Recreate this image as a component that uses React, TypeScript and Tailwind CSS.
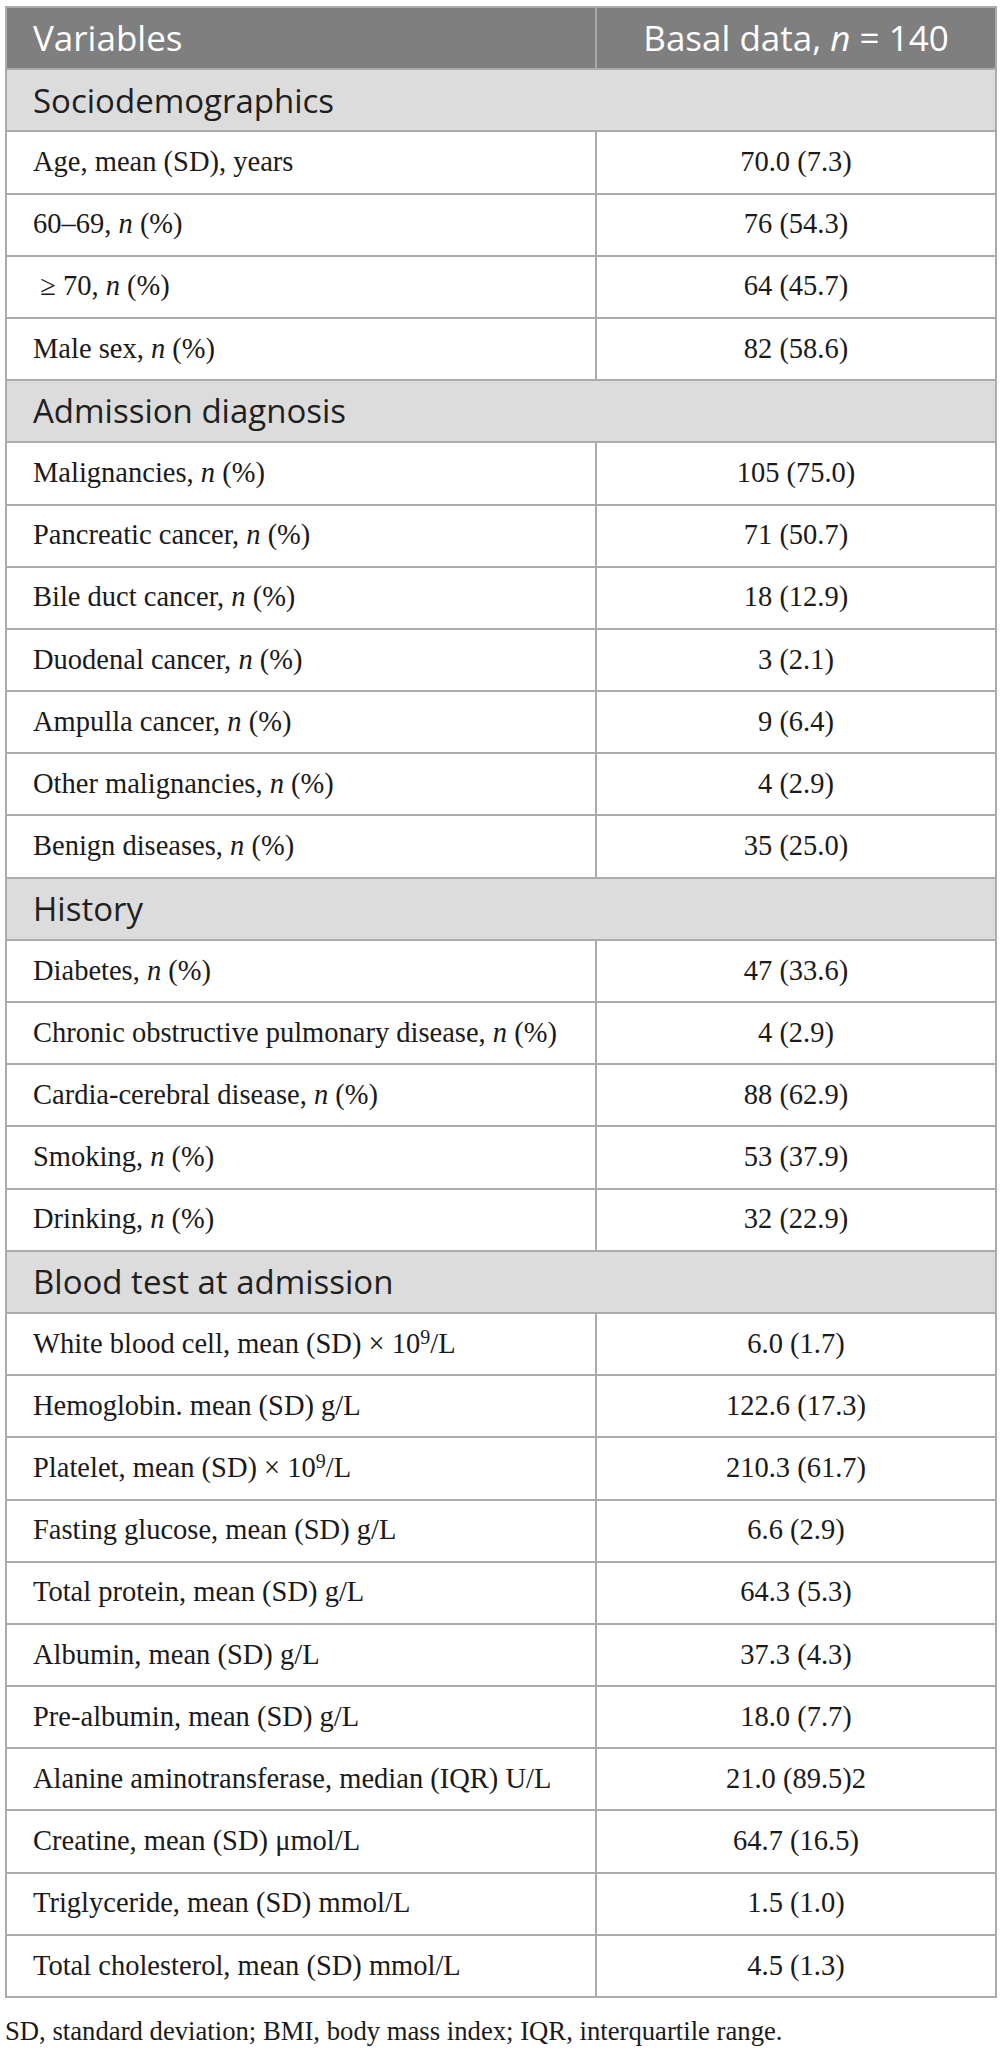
import React from "react";

type Row =
  | { kind: "section"; label: React.ReactNode }
  | { kind: "data"; label: React.ReactNode; value: string };

const N = () => <i>n</i>;
const Sup = () => (
  <sup className="relative -top-[0.45em] align-baseline text-[0.7em]">9</sup>
);

const rows: Row[] = [
  { kind: "section", label: "Sociodemographics" },
  { kind: "data", label: <>Age, mean (SD), years</>, value: "70.0 (7.3)" },
  { kind: "data", label: <>60–69, <N /> (%)</>, value: "76 (54.3)" },
  { kind: "data", label: <>&nbsp;≥ 70, <N /> (%)</>, value: "64 (45.7)" },
  { kind: "data", label: <>Male sex, <N /> (%)</>, value: "82 (58.6)" },
  { kind: "section", label: "Admission diagnosis" },
  { kind: "data", label: <>Malignancies, <N /> (%)</>, value: "105 (75.0)" },
  { kind: "data", label: <>Pancreatic cancer, <N /> (%)</>, value: "71 (50.7)" },
  { kind: "data", label: <>Bile duct cancer, <N /> (%)</>, value: "18 (12.9)" },
  { kind: "data", label: <>Duodenal cancer, <N /> (%)</>, value: "3 (2.1)" },
  { kind: "data", label: <>Ampulla cancer, <N /> (%)</>, value: "9 (6.4)" },
  { kind: "data", label: <>Other malignancies, <N /> (%)</>, value: "4 (2.9)" },
  { kind: "data", label: <>Benign diseases, <N /> (%)</>, value: "35 (25.0)" },
  { kind: "section", label: "History" },
  { kind: "data", label: <>Diabetes, <N /> (%)</>, value: "47 (33.6)" },
  { kind: "data", label: <>Chronic obstructive pulmonary disease, <N /> (%)</>, value: "4 (2.9)" },
  { kind: "data", label: <>Cardia-cerebral disease, <N /> (%)</>, value: "88 (62.9)" },
  { kind: "data", label: <>Smoking, <N /> (%)</>, value: "53 (37.9)" },
  { kind: "data", label: <>Drinking, <N /> (%)</>, value: "32 (22.9)" },
  { kind: "section", label: "Blood test at admission" },
  { kind: "data", label: <>White blood cell, mean (SD) × 10<Sup />/L</>, value: "6.0 (1.7)" },
  { kind: "data", label: <>Hemoglobin. mean (SD) g/L</>, value: "122.6 (17.3)" },
  { kind: "data", label: <>Platelet, mean (SD) × 10<Sup />/L</>, value: "210.3 (61.7)" },
  { kind: "data", label: <>Fasting glucose, mean (SD) g/L</>, value: "6.6 (2.9)" },
  { kind: "data", label: <>Total protein, mean (SD) g/L</>, value: "64.3 (5.3)" },
  { kind: "data", label: <>Albumin, mean (SD) g/L</>, value: "37.3 (4.3)" },
  { kind: "data", label: <>Pre-albumin, mean (SD) g/L</>, value: "18.0 (7.7)" },
  { kind: "data", label: <>Alanine aminotransferase, median (IQR) U/L</>, value: "21.0 (89.5)2" },
  { kind: "data", label: <>Creatine, mean (SD) μmol/L</>, value: "64.7 (16.5)" },
  { kind: "data", label: <>Triglyceride, mean (SD) mmol/L</>, value: "1.5 (1.0)" },
  { kind: "data", label: <>Total cholesterol, mean (SD) mmol/L</>, value: "4.5 (1.3)" },
];

const serif = "font-['Liberation_Serif',serif]";
const sans = "font-['Open_Sans',sans-serif]";

export default function App() {
  return (
    <div className="min-h-[2053px] bg-white pl-[5px] pt-[6px]">
      <div className="w-[992px] border-2 border-[#ababab]">
        {/* header */}
        <div
          className={`flex h-[62.19px] border-b-2 border-[#ababab] bg-[#7f7f7f] text-white ${sans} text-[35px]`}
        >
          <div className="flex w-[590px] items-center border-r-2 border-[#a9a9a9] pl-[26px]">
            <span>Variables</span>
          </div>
          <div className="flex flex-1 items-center justify-center">
            <span>
              Basal data, <i>n</i> = 140
            </span>
          </div>
        </div>
        {rows.map((r, i) => {
          const last = i === rows.length - 1;
          const rowCls = last ? "h-[60.19px]" : "h-[62.19px] border-b-2 border-[#ababab]";
          if (r.kind === "section") {
            return (
              <div
                key={i}
                className={`flex items-center bg-[#dcdcdc] pl-[26px] text-[33px] text-[#1f1f1f] ${sans} ${rowCls}`}
              >
                <span>{r.label}</span>
              </div>
            );
          }
          return (
            <div key={i} className={`flex text-[28.5px] text-[#1a1a1a] ${serif} ${rowCls}`}>
              <div className="flex w-[590px] items-center whitespace-nowrap border-r-2 border-[#ababab] pl-[26px]">
                <span>{r.label}</span>
              </div>
              <div className="flex flex-1 items-center justify-center">
                <span>{r.value}</span>
              </div>
            </div>
          );
        })}
      </div>
      <div className={`mt-[20px] text-[26.7px] leading-none text-[#1a1a1a] ${serif}`}>
        SD, standard deviation; BMI, body mass index; IQR, interquartile range.
      </div>
    </div>
  );
}
